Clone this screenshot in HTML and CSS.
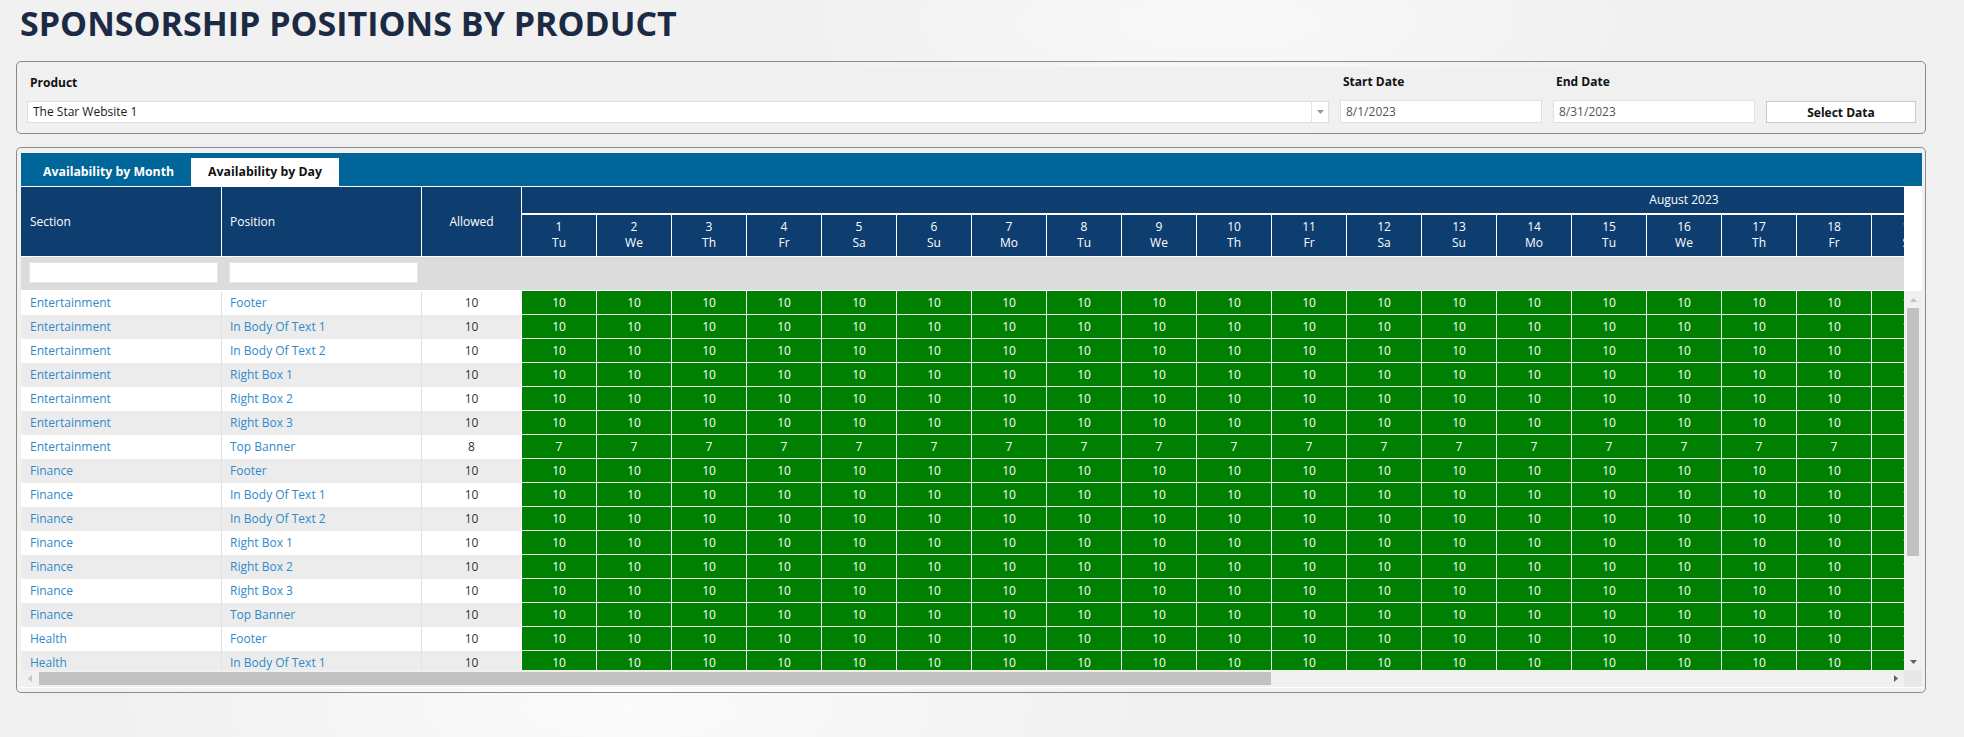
FILE: index.html
```html
<!DOCTYPE html>
<html lang="en">
<head>
<meta charset="utf-8">
<title>Sponsorship Positions by Product</title>
<link rel="stylesheet" href="styles.css">
</head>
<body>
<div class="page">
  <h1 class="title">SPONSORSHIP POSITIONS BY PRODUCT</h1>

  <div class="panel filter-panel">
    <div class="filter-inner">
      <div class="field product">
        <label class="flabel">Product</label>
        <div class="select">
          <span class="sel-text">The Star Website 1</span>
          <span class="sel-btn"><svg width="7" height="4" viewBox="0 0 7 4"><polygon points="0,0 7,0 3.5,4" fill="#9a9a9a"/></svg></span>
        </div>
      </div>
      <div class="field date">
        <label class="flabel">Start Date</label>
        <div class="dinput">8/1/2023</div>
      </div>
      <div class="field date">
        <label class="flabel">End Date</label>
        <div class="dinput">8/31/2023</div>
      </div>
      <button class="btn" type="button">Select Data</button>
    </div>
  </div>

  <div class="panel grid-panel">
    <div class="tabbar">
      <div class="tab">Availability by Month</div>
      <div class="tab active">Availability by Day</div>
    </div>
    <div class="frame">
      <div class="head">
        <div class="hgrid">
          <div class="hc fixed">Section</div>
          <div class="hc fixed">Position</div>
          <div class="hc fixed center">Allowed</div>
          <div class="hc month">August 2023</div>
          <div class="hc day">1<br>Tu</div><div class="hc day">2<br>We</div><div class="hc day">3<br>Th</div><div class="hc day">4<br>Fr</div><div class="hc day">5<br>Sa</div><div class="hc day">6<br>Su</div><div class="hc day">7<br>Mo</div>
          <div class="hc day">8<br>Tu</div><div class="hc day">9<br>We</div><div class="hc day">10<br>Th</div><div class="hc day">11<br>Fr</div><div class="hc day">12<br>Sa</div><div class="hc day">13<br>Su</div><div class="hc day">14<br>Mo</div>
          <div class="hc day">15<br>Tu</div><div class="hc day">16<br>We</div><div class="hc day">17<br>Th</div><div class="hc day">18<br>Fr</div><div class="hc day">19<br>Sa</div><div class="hc day">20<br>Su</div><div class="hc day">21<br>Mo</div>
          <div class="hc day">22<br>Tu</div><div class="hc day">23<br>We</div><div class="hc day">24<br>Th</div><div class="hc day">25<br>Fr</div><div class="hc day">26<br>Sa</div><div class="hc day">27<br>Su</div><div class="hc day">28<br>Mo</div>
          <div class="hc day">29<br>Tu</div><div class="hc day">30<br>We</div><div class="hc day">31<br>Th</div>
        </div>
        <div class="frow">
          <div class="fcell sec-f"><input class="finput" type="text"></div>
          <div class="fcell pos-f"><input class="finput" type="text"></div>
        </div>
      </div>
      <div class="blank"></div>

      <div class="body">
        <div class="brow"><div class="sec">Entertainment</div><div class="pos">Footer</div><div class="alw">10</div><span>10</span><span>10</span><span>10</span><span>10</span><span>10</span><span>10</span><span>10</span><span>10</span><span>10</span><span>10</span><span>10</span><span>10</span><span>10</span><span>10</span><span>10</span><span>10</span><span>10</span><span>10</span><span>10</span><span>10</span><span>10</span><span>10</span><span>10</span><span>10</span><span>10</span><span>10</span><span>10</span><span>10</span><span>10</span><span>10</span><span>10</span></div>
        <div class="brow"><div class="sec">Entertainment</div><div class="pos">In Body Of Text 1</div><div class="alw">10</div><span>10</span><span>10</span><span>10</span><span>10</span><span>10</span><span>10</span><span>10</span><span>10</span><span>10</span><span>10</span><span>10</span><span>10</span><span>10</span><span>10</span><span>10</span><span>10</span><span>10</span><span>10</span><span>10</span><span>10</span><span>10</span><span>10</span><span>10</span><span>10</span><span>10</span><span>10</span><span>10</span><span>10</span><span>10</span><span>10</span><span>10</span></div>
        <div class="brow"><div class="sec">Entertainment</div><div class="pos">In Body Of Text 2</div><div class="alw">10</div><span>10</span><span>10</span><span>10</span><span>10</span><span>10</span><span>10</span><span>10</span><span>10</span><span>10</span><span>10</span><span>10</span><span>10</span><span>10</span><span>10</span><span>10</span><span>10</span><span>10</span><span>10</span><span>10</span><span>10</span><span>10</span><span>10</span><span>10</span><span>10</span><span>10</span><span>10</span><span>10</span><span>10</span><span>10</span><span>10</span><span>10</span></div>
        <div class="brow"><div class="sec">Entertainment</div><div class="pos">Right Box 1</div><div class="alw">10</div><span>10</span><span>10</span><span>10</span><span>10</span><span>10</span><span>10</span><span>10</span><span>10</span><span>10</span><span>10</span><span>10</span><span>10</span><span>10</span><span>10</span><span>10</span><span>10</span><span>10</span><span>10</span><span>10</span><span>10</span><span>10</span><span>10</span><span>10</span><span>10</span><span>10</span><span>10</span><span>10</span><span>10</span><span>10</span><span>10</span><span>10</span></div>
        <div class="brow"><div class="sec">Entertainment</div><div class="pos">Right Box 2</div><div class="alw">10</div><span>10</span><span>10</span><span>10</span><span>10</span><span>10</span><span>10</span><span>10</span><span>10</span><span>10</span><span>10</span><span>10</span><span>10</span><span>10</span><span>10</span><span>10</span><span>10</span><span>10</span><span>10</span><span>10</span><span>10</span><span>10</span><span>10</span><span>10</span><span>10</span><span>10</span><span>10</span><span>10</span><span>10</span><span>10</span><span>10</span><span>10</span></div>
        <div class="brow"><div class="sec">Entertainment</div><div class="pos">Right Box 3</div><div class="alw">10</div><span>10</span><span>10</span><span>10</span><span>10</span><span>10</span><span>10</span><span>10</span><span>10</span><span>10</span><span>10</span><span>10</span><span>10</span><span>10</span><span>10</span><span>10</span><span>10</span><span>10</span><span>10</span><span>10</span><span>10</span><span>10</span><span>10</span><span>10</span><span>10</span><span>10</span><span>10</span><span>10</span><span>10</span><span>10</span><span>10</span><span>10</span></div>
        <div class="brow"><div class="sec">Entertainment</div><div class="pos">Top Banner</div><div class="alw">8</div><span>7</span><span>7</span><span>7</span><span>7</span><span>7</span><span>7</span><span>7</span><span>7</span><span>7</span><span>7</span><span>7</span><span>7</span><span>7</span><span>7</span><span>7</span><span>7</span><span>7</span><span>7</span><span>7</span><span>7</span><span>7</span><span>7</span><span>7</span><span>7</span><span>7</span><span>7</span><span>7</span><span>7</span><span>7</span><span>7</span><span>7</span></div>
        <div class="brow"><div class="sec">Finance</div><div class="pos">Footer</div><div class="alw">10</div><span>10</span><span>10</span><span>10</span><span>10</span><span>10</span><span>10</span><span>10</span><span>10</span><span>10</span><span>10</span><span>10</span><span>10</span><span>10</span><span>10</span><span>10</span><span>10</span><span>10</span><span>10</span><span>10</span><span>10</span><span>10</span><span>10</span><span>10</span><span>10</span><span>10</span><span>10</span><span>10</span><span>10</span><span>10</span><span>10</span><span>10</span></div>
        <div class="brow"><div class="sec">Finance</div><div class="pos">In Body Of Text 1</div><div class="alw">10</div><span>10</span><span>10</span><span>10</span><span>10</span><span>10</span><span>10</span><span>10</span><span>10</span><span>10</span><span>10</span><span>10</span><span>10</span><span>10</span><span>10</span><span>10</span><span>10</span><span>10</span><span>10</span><span>10</span><span>10</span><span>10</span><span>10</span><span>10</span><span>10</span><span>10</span><span>10</span><span>10</span><span>10</span><span>10</span><span>10</span><span>10</span></div>
        <div class="brow"><div class="sec">Finance</div><div class="pos">In Body Of Text 2</div><div class="alw">10</div><span>10</span><span>10</span><span>10</span><span>10</span><span>10</span><span>10</span><span>10</span><span>10</span><span>10</span><span>10</span><span>10</span><span>10</span><span>10</span><span>10</span><span>10</span><span>10</span><span>10</span><span>10</span><span>10</span><span>10</span><span>10</span><span>10</span><span>10</span><span>10</span><span>10</span><span>10</span><span>10</span><span>10</span><span>10</span><span>10</span><span>10</span></div>
        <div class="brow"><div class="sec">Finance</div><div class="pos">Right Box 1</div><div class="alw">10</div><span>10</span><span>10</span><span>10</span><span>10</span><span>10</span><span>10</span><span>10</span><span>10</span><span>10</span><span>10</span><span>10</span><span>10</span><span>10</span><span>10</span><span>10</span><span>10</span><span>10</span><span>10</span><span>10</span><span>10</span><span>10</span><span>10</span><span>10</span><span>10</span><span>10</span><span>10</span><span>10</span><span>10</span><span>10</span><span>10</span><span>10</span></div>
        <div class="brow"><div class="sec">Finance</div><div class="pos">Right Box 2</div><div class="alw">10</div><span>10</span><span>10</span><span>10</span><span>10</span><span>10</span><span>10</span><span>10</span><span>10</span><span>10</span><span>10</span><span>10</span><span>10</span><span>10</span><span>10</span><span>10</span><span>10</span><span>10</span><span>10</span><span>10</span><span>10</span><span>10</span><span>10</span><span>10</span><span>10</span><span>10</span><span>10</span><span>10</span><span>10</span><span>10</span><span>10</span><span>10</span></div>
        <div class="brow"><div class="sec">Finance</div><div class="pos">Right Box 3</div><div class="alw">10</div><span>10</span><span>10</span><span>10</span><span>10</span><span>10</span><span>10</span><span>10</span><span>10</span><span>10</span><span>10</span><span>10</span><span>10</span><span>10</span><span>10</span><span>10</span><span>10</span><span>10</span><span>10</span><span>10</span><span>10</span><span>10</span><span>10</span><span>10</span><span>10</span><span>10</span><span>10</span><span>10</span><span>10</span><span>10</span><span>10</span><span>10</span></div>
        <div class="brow"><div class="sec">Finance</div><div class="pos">Top Banner</div><div class="alw">10</div><span>10</span><span>10</span><span>10</span><span>10</span><span>10</span><span>10</span><span>10</span><span>10</span><span>10</span><span>10</span><span>10</span><span>10</span><span>10</span><span>10</span><span>10</span><span>10</span><span>10</span><span>10</span><span>10</span><span>10</span><span>10</span><span>10</span><span>10</span><span>10</span><span>10</span><span>10</span><span>10</span><span>10</span><span>10</span><span>10</span><span>10</span></div>
        <div class="brow"><div class="sec">Health</div><div class="pos">Footer</div><div class="alw">10</div><span>10</span><span>10</span><span>10</span><span>10</span><span>10</span><span>10</span><span>10</span><span>10</span><span>10</span><span>10</span><span>10</span><span>10</span><span>10</span><span>10</span><span>10</span><span>10</span><span>10</span><span>10</span><span>10</span><span>10</span><span>10</span><span>10</span><span>10</span><span>10</span><span>10</span><span>10</span><span>10</span><span>10</span><span>10</span><span>10</span><span>10</span></div>
        <div class="brow"><div class="sec">Health</div><div class="pos">In Body Of Text 1</div><div class="alw">10</div><span>10</span><span>10</span><span>10</span><span>10</span><span>10</span><span>10</span><span>10</span><span>10</span><span>10</span><span>10</span><span>10</span><span>10</span><span>10</span><span>10</span><span>10</span><span>10</span><span>10</span><span>10</span><span>10</span><span>10</span><span>10</span><span>10</span><span>10</span><span>10</span><span>10</span><span>10</span><span>10</span><span>10</span><span>10</span><span>10</span><span>10</span></div>
      </div>

      <div class="vbar">
        <div class="sb-btn"><svg width="7" height="4" viewBox="0 0 7 4"><polygon points="0,4 7,4 3.5,0" fill="#c4c4c4"/></svg></div>
        <div class="vthumb"></div>
        <div class="sb-fill"></div>
        <div class="sb-btn"><svg width="7" height="4" viewBox="0 0 7 4"><polygon points="0,0 7,0 3.5,4" fill="#606060"/></svg></div>
      </div>

      <div class="hbar">
        <div class="sb-btn"><svg width="4" height="7" viewBox="0 0 4 7"><polygon points="4,0 4,7 0,3.5" fill="#c4c4c4"/></svg></div>
        <div class="hthumb"></div>
        <div class="sb-fill"></div>
        <div class="sb-btn"><svg width="4" height="7" viewBox="0 0 4 7"><polygon points="0,0 0,7 4,3.5" fill="#606060"/></svg></div>
      </div>
      <div class="corner"></div>
    </div>
  </div>
</div>
</body>
</html>
```

FILE: styles.css
```css
* { box-sizing: border-box; }

html, body { margin: 0; }

body {
  width: 1964px;
  height: 737px;
  overflow: hidden;
  font-family: "Open Sans", "Noto Sans", sans-serif;
  font-size: 12px;
  color: #222;
  background:
    radial-gradient(ellipse 520px 160px at 32% 96%, #fbfbfb 0%, rgba(251,251,251,0) 100%),
    radial-gradient(ellipse 420px 120px at 62% 3%, #f9f9f9 0%, rgba(249,249,249,0) 100%),
    #f1f1f1;
}

.page { padding: 0 38px 0 16px; }

.title {
  margin: 6px 0 0 4px;
  font-size: 34px;
  line-height: 34px;
  font-weight: 700;
  color: #1c2a44;
}

.panel {
  border: 1px solid #8a8a8a;
  border-radius: 5px;
}

/* ---------- filter panel ---------- */
.filter-panel {
  margin-top: 21px;
  padding: 5px 4px 4px 5px;
}

.filter-inner {
  background: #f0f0f0;
  display: flex;
  align-items: flex-end;
  gap: 11px;
  padding: 7px 5px 6px;
}

.field {
  display: flex;
  flex-direction: column;
  gap: 10px;
}
.field.product { flex: 1; }
.field.date { width: 202px; }

.flabel {
  font-weight: 700;
  line-height: 16px;
  padding-left: 3px;
  color: #111;
}

.select {
  display: flex;
  height: 22px;
  background: #fff;
  border: 1px solid #dedede;
}
.sel-text {
  flex: 1;
  padding-left: 5px;
  line-height: 20px;
  color: #1a1a1a;
}
.sel-btn {
  width: 17px;
  border-left: 1px solid #e6e6e6;
  display: flex;
  align-items: center;
  justify-content: center;
}

.dinput {
  height: 23px;
  background: #fff;
  border: 1px solid #e0e0e0;
  padding-left: 5px;
  line-height: 21px;
  color: #555;
}

.btn {
  width: 150px;
  height: 22px;
  margin: 0;
  padding: 0;
  background: #fff;
  border: 1px solid #c8c8c8;
  font-family: inherit;
  font-size: 12px;
  font-weight: 700;
  color: #111;
}

/* ---------- grid panel ---------- */
.grid-panel {
  margin-top: 13px;
  padding: 5px 3px 4px 4px;
}

.tabbar {
  height: 33px;
  background: #006699;
  display: flex;
  align-items: flex-end;
  padding-left: 5px;
}
.tab {
  height: 28px;
  line-height: 28px;
  padding: 0 17px;
  font-size: 12.3px;
  font-weight: 700;
  color: #fff;
  white-space: nowrap;
}
.tab.active {
  background: #fff;
  color: #111;
}

.frame {
  background: #fff;
  padding: 1px 0;
  display: grid;
  grid-template-columns: 1883px 1fr;
  grid-template-rows: 104px 379px 17px;
  grid-template-areas:
    "head blank"
    "body vbar"
    "hbar corner";
}

.head { grid-area: head; overflow: hidden; }
.blank { grid-area: blank; background: #fff; }
.body { grid-area: body; overflow: hidden; }
.vbar { grid-area: vbar; }
.hbar { grid-area: hbar; }
.corner { grid-area: corner; background: #e8e8e8; }

.hgrid,
.frow,
.brow {
  display: grid;
  grid-template-columns: 201px 200px 100px repeat(31, 75px);
  width: max-content;
}

.hgrid {
  grid-template-rows: 28px 41px;
  border-bottom: 1px solid #fff;
}

.hc {
  background: #0e3e6f;
  color: #fff;
  border-right: 1px solid #fff;
  white-space: nowrap;
}
.hc.fixed {
  grid-row: 1 / span 2;
  display: flex;
  align-items: center;
  padding-left: 9px;
}
.hc.fixed:nth-child(2) { padding-left: 8px; }
.hc.center { justify-content: center; padding-left: 0; }
.hc.month {
  grid-column: 4 / span 31;
  border-bottom: 2px solid #fff;
  line-height: 26px;
  text-align: center;
}
.hc.day {
  text-align: center;
  line-height: 16px;
  padding-top: 4px;
}

.frow {
  height: 34px;
  background: #dcdcdc;
  border-bottom: 1px solid #fff;
  width: 1883px;
  grid-template-columns: 201px 200px;
}
.fcell { padding: 5px 4px 0 8px; }
.fcell.pos-f { padding-left: 7px; }
.finput {
  display: block;
  width: 100%;
  height: 21px;
  margin: 0;
  padding: 0 4px;
  border: 1px solid #e6e6e6;
  background: #fff;
  font-family: inherit;
  font-size: 12px;
}

.brow { height: 24px; }

.sec, .pos, .alw {
  background: #fff;
  line-height: 24px;
  white-space: nowrap;
}
.sec { padding-left: 9px; color: #3089c9; border-right: 1px solid #e2e2e2; }
.pos { padding-left: 8px; color: #3089c9; border-right: 1px solid #e2e2e2; }
.alw { text-align: center; color: #333; border-right: 1px solid #fff; }

.brow:nth-child(even) .sec,
.brow:nth-child(even) .pos,
.brow:nth-child(even) .alw { background: #ececec; }

.brow > span {
  background: #008000;
  color: #fff;
  text-align: center;
  line-height: 23px;
  border-right: 1px solid #f0f0f0;
  border-bottom: 1px solid #f0f0f0;
}

/* ---------- scrollbars ---------- */
.vbar {
  background: #f0f0f0;
  display: flex;
  flex-direction: column;
}
.hbar {
  background: #f0f0f0;
  display: flex;
  flex-direction: row;
}
.sb-btn {
  flex: 0 0 17px;
  display: flex;
  align-items: center;
  justify-content: center;
}
.sb-fill { flex: 1; }
.vthumb {
  height: 248px;
  margin: 0 3px;
  background: #c1c1c1;
}
.hthumb {
  width: 1232px;
  margin: 2px 0 2px 1px;
  background: #c1c1c1;
}
```
